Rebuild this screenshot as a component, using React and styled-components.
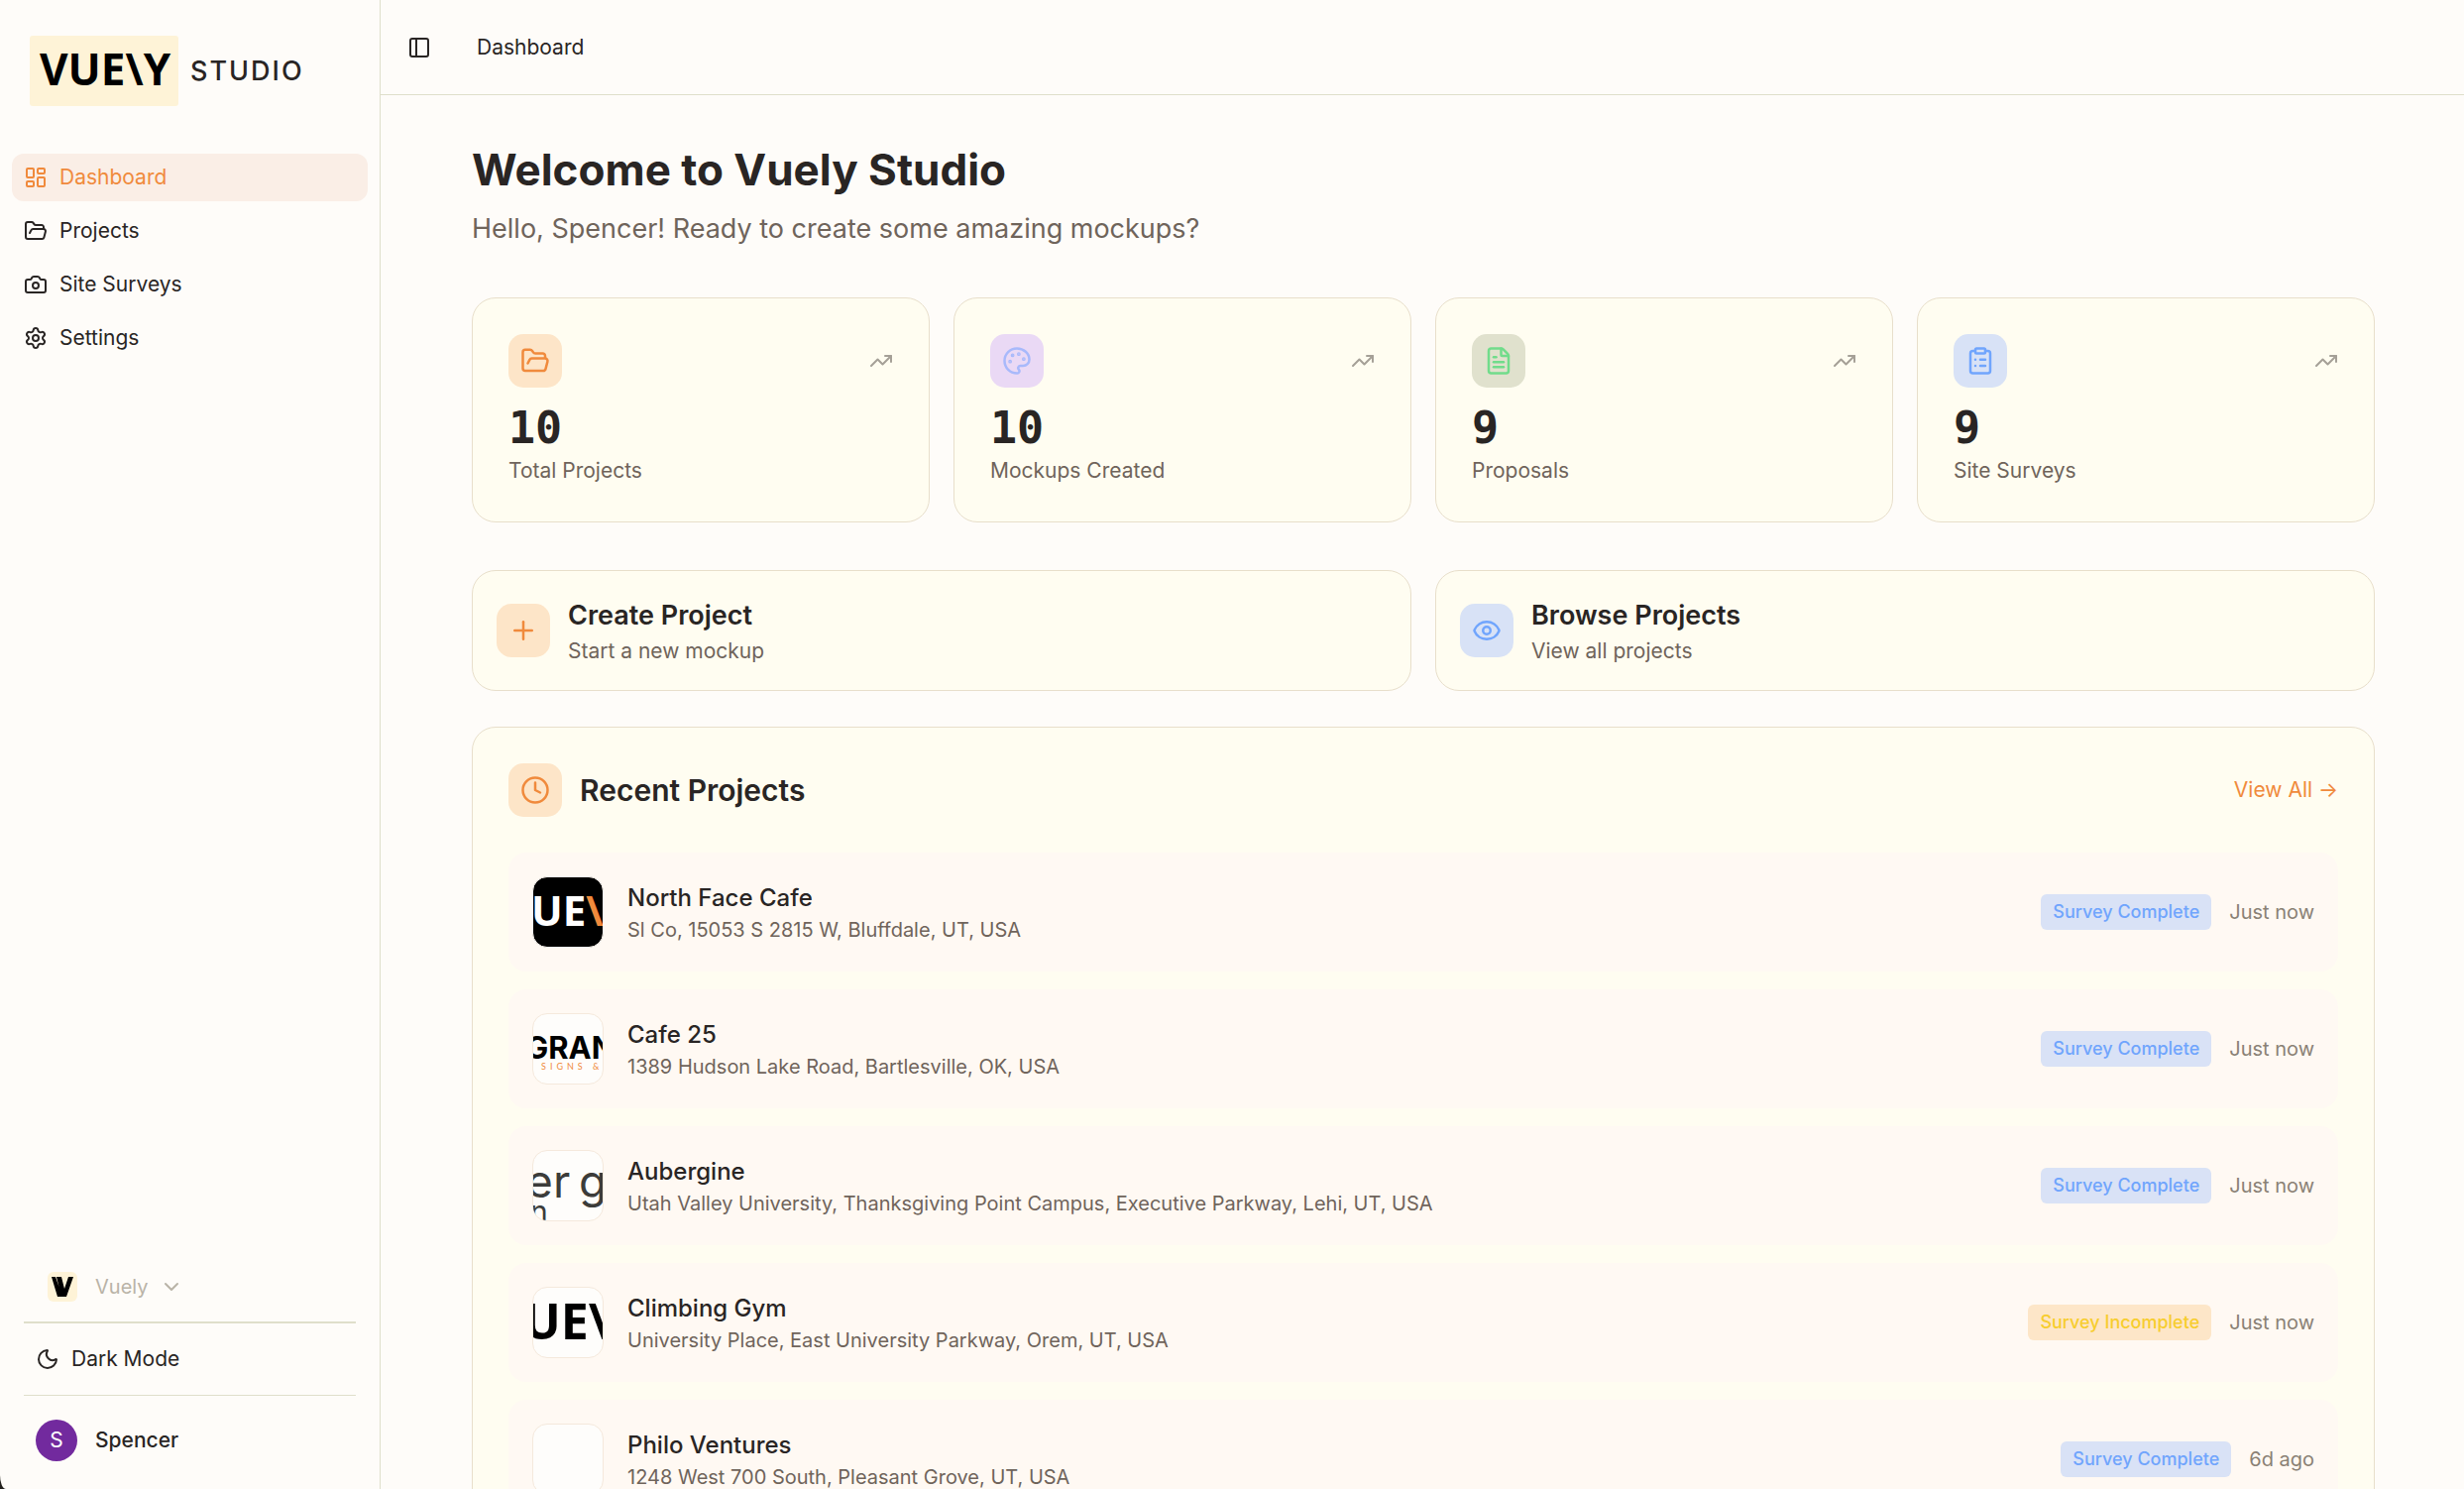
import React from 'react';
import styled, { createGlobalStyle, css } from 'styled-components';
import {
  Camera, ChevronDown, ClipboardList, Clock, Eye, FileText, FolderOpen,
  LayoutDashboard, Moon, Palette, PanelLeft, Plus, Settings, TrendingUp,
} from 'lucide-react';

const GlobalStyle = createGlobalStyle`
  * {
    box-sizing: border-box;
  }
  body {
    margin: 0;
    overflow: hidden;
    background-color: #23211e;
    color: #292524;
    font-family: Inter, "Open Sans", sans-serif;
    font-size: 21px;
    line-height: 30px;
  }
  h1, h2, h3, p {
    margin: 0;
  }
  a {
    color: inherit;
    text-decoration: none;
  }
  button {
    padding: 0;
    border: 0;
    background: none;
    color: inherit;
    font: inherit;
    cursor: pointer;
  }
  svg {
    display: block;
    flex-shrink: 0;
  }
`

const Shell = styled.div`
  display: flex;
  height: 100vh;
  overflow: hidden;
  border-bottom-left-radius: 6px 14px;
  background-color: #fefcf9;
`

const Sidebar = styled.aside`
  display: flex;
  flex-direction: column;
  width: 384px;
  flex-shrink: 0;
  border-right: 1px solid #dfdfcb;
`

const Brand = styled.a`
  display: flex;
  align-items: center;
  gap: 12px;
  padding: 36px 30px 48px;
`

const BrandName = styled.span`
  font-size: 27px;
  font-weight: 500;
  letter-spacing: 2px;
`

const Nav = styled.nav`
  display: flex;
  flex-direction: column;
  gap: 6px;
  padding: 0 12px;
`

const NavLink = styled.a`
  display: flex;
  align-items: center;
  gap: 12px;
  height: 48px;
  padding: 0 12px;
  border-radius: 12px;
  ${props => props.$active && css`
    background-color: #faeee6;
    color: #f08a3c;
  `}
`

const SidebarFooter = styled.div`
  margin-top: auto;
  padding: 0 24px 4px;
`

const TeamButton = styled.button`
  display: flex;
  align-items: center;
  gap: 12px;
  width: 100%;
  height: 72px;
  padding: 0 24px;
  border-bottom: 2px solid #dfdfcb;
  color: #b9b3a7;
  font-size: 20px;
`

const TeamName = styled.span`
  margin-left: 6px;
`

const ThemeButton = styled.button`
  display: flex;
  align-items: center;
  gap: 12px;
  width: 100%;
  height: 73px;
  padding: 0 12px;
  border-bottom: 1px solid #dfdfcb;
`

const UserButton = styled.button`
  display: flex;
  align-items: center;
  gap: 18px;
  width: 100%;
  height: 90px;
  padding: 0 12px;
  font-weight: 500;
`

const Avatar = styled.span`
  display: flex;
  align-items: center;
  justify-content: center;
  width: 42px;
  height: 42px;
  border-radius: 50%;
  background-color: #722a9e;
  color: #fff;
  font-weight: 400;
`

const Main = styled.main`
  flex: 1;
  min-width: 0;
`

const TopBar = styled.header`
  display: flex;
  align-items: center;
  gap: 46px;
  height: 96px;
  padding: 0 27px;
  border-bottom: 1px solid #dfdfcb;
`

const Content = styled.div`
  padding: 48px 90px 48px 92px;
`

const Title = styled.h1`
  font-size: 44px;
  line-height: 54px;
  font-weight: 700;
`

const Subtitle = styled.p`
  margin-top: 12px;
  color: #6f645b;
  font-size: 27px;
  line-height: 42px;
`

const CardGrid = styled.div`
  display: grid;
  grid-template-columns: repeat(${props => props.$columns}, 1fr);
  gap: 24px;
  margin-top: 48px;
`

const cardStyle = css`
  border: 1px solid #e8dfcb;
  border-radius: 24px;
  background-color: #fffdf1;
`

const StatCard = styled.article`
  ${cardStyle}
  height: 227px;
  padding: 36px;
`

const StatTop = styled.div`
  display: flex;
  align-items: center;
  justify-content: space-between;
  color: #a5a097;
`

const IconTile = styled.span`
  display: flex;
  align-items: center;
  justify-content: center;
  width: 54px;
  height: 54px;
  flex-shrink: 0;
  border-radius: 15px;
  background-color: ${props => props.$bg};
  color: ${props => props.$color};
`

const StatValue = styled.p`
  margin-top: 18px;
  font-family: "DejaVu Sans Mono", monospace;
  font-size: 45px;
  line-height: 45px;
  font-weight: 700;
`

const StatLabel = styled.p`
  margin-top: 6px;
  color: #6f645b;
`

const ActionCard = styled.a`
  ${cardStyle}
  display: flex;
  align-items: center;
  gap: 18px;
  height: 122px;
  padding: 0 24px;
`

const ActionTitle = styled.h3`
  font-size: 27px;
  line-height: 42px;
  font-weight: 600;
`

const ActionText = styled.p`
  color: #6f645b;
`

const RecentPanel = styled.section`
  ${cardStyle}
  margin-top: 36px;
  padding: 36px;
`

const PanelHead = styled.div`
  display: flex;
  align-items: center;
  gap: 18px;
  margin-bottom: 36px;
`

const PanelTitle = styled.h2`
  font-size: 30px;
  line-height: 42px;
  font-weight: 600;
`

const ViewAll = styled.a`
  margin-left: auto;
  color: #f08a3c;
`

const ProjectList = styled.div`
  display: flex;
  flex-direction: column;
  gap: 18px;
`

const ProjectRow = styled.a`
  display: flex;
  align-items: center;
  gap: 24px;
  height: 120px;
  padding: 0 24px;
  border-radius: 18px;
  background-color: #fff9f3;
`

const Thumb = styled.span`
  width: 72px;
  height: 72px;
  flex-shrink: 0;
  overflow: hidden;
  border: 1px solid ${props => props.$dark ? '#fff9f3' : '#f5e9dc'};
  border-radius: 15px;
  background-color: ${props => props.$dark ? '#000' : '#fefdfb'};
`

const ProjectInfo = styled.div`
  flex: 1;
  min-width: 0;
`

const ProjectName = styled.h3`
  font-size: 24px;
  line-height: 36px;
  font-weight: 500;
`

const Address = styled.p`
  color: #6f645b;
  font-size: 20px;
  line-height: 28px;
`

const ProjectStatus = styled.div`
  display: flex;
  align-items: center;
  gap: 18px;
`

const Badge = styled.span`
  padding: 3px 12px;
  border-radius: 6px;
  background-color: ${props => props.$warn ? '#fde6c8' : '#d9e2f6'};
  color: ${props => props.$warn ? '#f7cd2e' : '#70a5fd'};
  font-size: 18px;
  font-weight: 500;
`

const When = styled.span`
  color: #8a8175;
  font-size: 20px;
`

const BrandLogo = () => (
  <svg width="150" height="71" viewBox="0 0 150 71" aria-hidden="true">
    <rect width="150" height="71" rx="3" fill="#fef3d7" />
    <text x="10" y="50" fontFamily="Open Sans, sans-serif" fontSize="44" fontWeight="700">VUE\Y</text>
  </svg>
)

const TeamLogo = () => (
  <svg width="30" height="30" viewBox="0 0 30 30" aria-hidden="true">
    <rect width="30" height="30" rx="6" fill="#fef3d7" />
    <path d="M4 5h4l7 20h-5zM9 5h5l3 12 4-12h5l-7 20h-5z" fill="#000" />
  </svg>
)

const NorthFaceThumb = () => (
  <svg width="70" height="70" viewBox="0 0 70 70" aria-hidden="true">
    <text x="-2" y="49" fill="#fff" fontFamily="Open Sans, sans-serif" fontSize="42" fontWeight="700">
      UE<tspan fill="#f08a3c">\</tspan>
    </text>
  </svg>
)

const ClimbingThumb = () => (
  <svg width="70" height="70" viewBox="0 0 70 70" aria-hidden="true">
    <text x="-10" y="52" fontFamily="Open Sans, sans-serif" fontSize="50" fontWeight="700">UE\</text>
  </svg>
)

const CafeThumb = () => (
  <svg width="70" height="70" viewBox="0 0 70 70" aria-hidden="true">
    <text x="-8" y="45" fontFamily="Inter, sans-serif" fontSize="31" fontWeight="700">GRAN</text>
    <text x="8" y="56" fill="#f08a3c" fontFamily="Lato, sans-serif" fontSize="9" letterSpacing="4">SIGNS &amp;</text>
  </svg>
)

const AubergineThumb = () => (
  <svg width="70" height="70" viewBox="0 0 70 70" aria-hidden="true">
    <g fill="#3c3c3a" fontFamily="Inter, sans-serif" fontSize="46">
      <text x="-7" y="47">e</text>
      <text x="20" y="47">r</text>
      <text x="46" y="47">g</text>
      <text x="-3" y="72" fontSize="30">n</text>
    </g>
  </svg>
)

const orange = { $bg: '#fde5c8', $color: '#f08a3c' }
const blue = { $bg: '#d8e2f6', $color: '#70a5fd' }
const purple = { $bg: '#ead9f5', $color: '#a8b9fb' }
const green = { $bg: '#e0e1cd', $color: '#71dc8b' }

const links = [
  { label: 'Dashboard', icon: LayoutDashboard, active: true },
  { label: 'Projects', icon: FolderOpen },
  { label: 'Site Surveys', icon: Camera },
  { label: 'Settings', icon: Settings },
]

const stats = [
  { value: 10, label: 'Total Projects', icon: FolderOpen, tone: orange },
  { value: 10, label: 'Mockups Created', icon: Palette, tone: purple },
  { value: 9, label: 'Proposals', icon: FileText, tone: green },
  { value: 9, label: 'Site Surveys', icon: ClipboardList, tone: blue },
]

const actions = [
  { title: 'Create Project', text: 'Start a new mockup', icon: Plus, tone: orange },
  { title: 'Browse Projects', text: 'View all projects', icon: Eye, tone: blue },
]

const projects = [
  {
    name: 'North Face Cafe',
    address: 'Sl Co, 15053 S 2815 W, Bluffdale, UT, USA',
    when: 'Just now',
    dark: true,
    logo: <NorthFaceThumb />,
  },
  {
    name: 'Cafe 25',
    address: '1389 Hudson Lake Road, Bartlesville, OK, USA',
    when: 'Just now',
    logo: <CafeThumb />,
  },
  {
    name: 'Aubergine',
    address: 'Utah Valley University, Thanksgiving Point Campus, Executive Parkway, Lehi, UT, USA',
    when: 'Just now',
    logo: <AubergineThumb />,
  },
  {
    name: 'Climbing Gym',
    address: 'University Place, East University Parkway, Orem, UT, USA',
    when: 'Just now',
    incomplete: true,
    logo: <ClimbingThumb />,
  },
  {
    name: 'Philo Ventures',
    address: '1248 West 700 South, Pleasant Grove, UT, USA',
    when: '6d ago',
  },
]

const App = () => (
  <Shell>
    <GlobalStyle />
    <Sidebar>
      <Brand href="#">
        <BrandLogo />
        <BrandName>STUDIO</BrandName>
      </Brand>
      <Nav>
        {links.map(({ label, icon: Icon, active }) => (
          <NavLink href="#" key={label} $active={active}>
            <Icon size={24} />
            {label}
          </NavLink>
        ))}
      </Nav>
      <SidebarFooter>
        <TeamButton>
          <TeamLogo />
          <TeamName>Vuely</TeamName>
          <ChevronDown size={24} />
        </TeamButton>
        <ThemeButton>
          <Moon size={24} />
          Dark Mode
        </ThemeButton>
        <UserButton>
          <Avatar>S</Avatar>
          Spencer
        </UserButton>
      </SidebarFooter>
    </Sidebar>
    <Main>
      <TopBar>
        <button aria-label="Toggle sidebar"><PanelLeft size={24} /></button>
        <span>Dashboard</span>
      </TopBar>
      <Content>
        <Title>Welcome to Vuely Studio</Title>
        <Subtitle>Hello, Spencer! Ready to create some amazing mockups?</Subtitle>
        <CardGrid $columns={4}>
          {stats.map(({ value, label, icon: Icon, tone }) => (
            <StatCard key={label}>
              <StatTop>
                <IconTile {...tone}><Icon size={30} /></IconTile>
                <TrendingUp size={24} />
              </StatTop>
              <StatValue>{value}</StatValue>
              <StatLabel>{label}</StatLabel>
            </StatCard>
          ))}
        </CardGrid>
        <CardGrid $columns={2}>
          {actions.map(({ title, text, icon: Icon, tone }) => (
            <ActionCard href="#" key={title}>
              <IconTile {...tone}><Icon size={30} /></IconTile>
              <div>
                <ActionTitle>{title}</ActionTitle>
                <ActionText>{text}</ActionText>
              </div>
            </ActionCard>
          ))}
        </CardGrid>
        <RecentPanel>
          <PanelHead>
            <IconTile {...orange}><Clock size={30} /></IconTile>
            <PanelTitle>Recent Projects</PanelTitle>
            <ViewAll href="#">View All →</ViewAll>
          </PanelHead>
          <ProjectList>
            {projects.map(({ name, address, when, dark, incomplete, logo }) => (
              <ProjectRow href="#" key={name}>
                <Thumb $dark={dark}>{logo}</Thumb>
                <ProjectInfo>
                  <ProjectName>{name}</ProjectName>
                  <Address>{address}</Address>
                </ProjectInfo>
                <ProjectStatus>
                  <Badge $warn={incomplete}>{incomplete ? 'Survey Incomplete' : 'Survey Complete'}</Badge>
                  <When>{when}</When>
                </ProjectStatus>
              </ProjectRow>
            ))}
          </ProjectList>
        </RecentPanel>
      </Content>
    </Main>
  </Shell>
);

export default App;
